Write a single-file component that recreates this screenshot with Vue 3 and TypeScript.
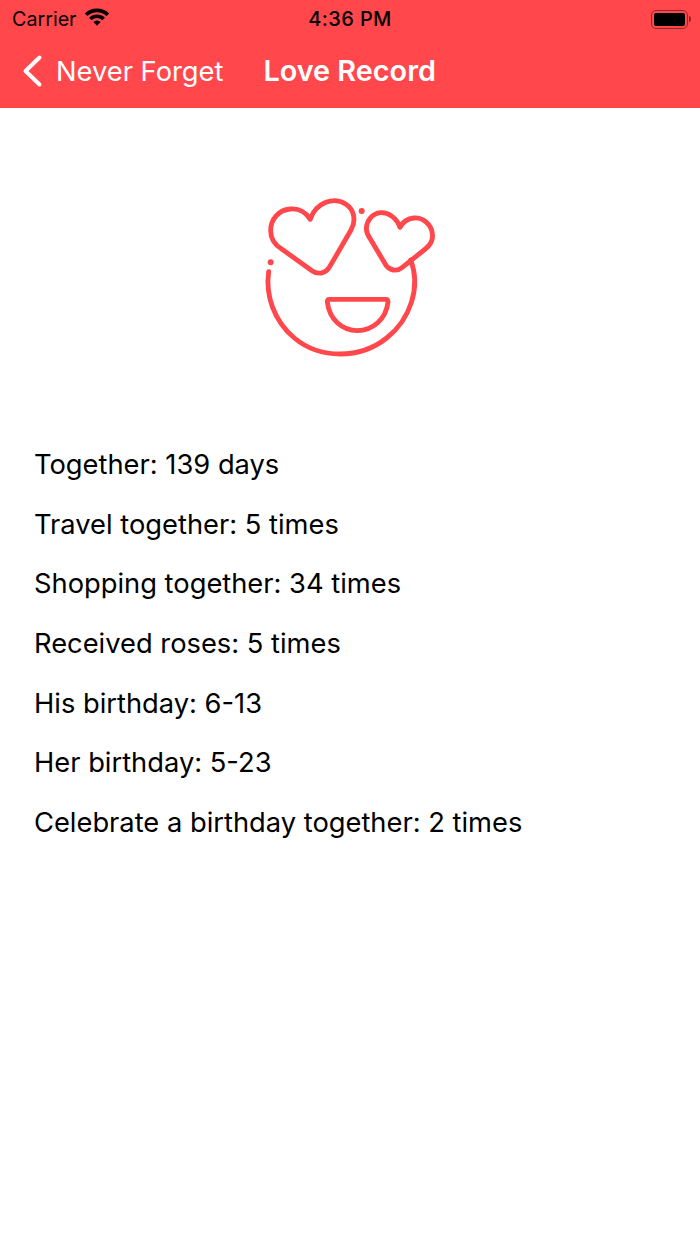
<template>
  <div class="screen">
    <header class="header">
      <div class="status-bar">
        <div class="status-left">
          <span class="carrier">Carrier</span>
          <svg class="wifi" width="28" height="22" viewBox="0 0 26 20">
            <g fill="none" stroke="#000" stroke-width="3.4">
              <path d="M2.9 8.9A14.3 14.3 0 0 1 23.1 8.9" />
              <path d="M6.8 12.8A8.8 8.8 0 0 1 19.2 12.8" />
            </g>
            <path d="M13 19 9.6 15.6A4.8 4.8 0 0 1 16.4 15.6Z" fill="#000" />
          </svg>
        </div>
        <span class="time">4:36 PM</span>
        <div class="battery">
          <div class="battery-body"><div class="battery-level"></div></div>
          <div class="battery-cap"></div>
        </div>
      </div>
      <nav class="nav">
        <div class="back">
          <svg width="24" height="36" viewBox="0 0 24 36">
            <path d="M19.5 4.5 5.5 18l14 13.5" fill="none" stroke="#fff" stroke-width="4" stroke-linecap="round" stroke-linejoin="round" />
          </svg>
          <span>Never Forget</span>
        </div>
        <h1 class="title">Love Record</h1>
      </nav>
    </header>

    <main class="content">
      <svg class="emoji" width="220" height="190" viewBox="0 0 660 570">
        <g fill="none" stroke="#ff474c" stroke-width="14.5" stroke-linecap="round" stroke-linejoin="round">
          <path d="M211 118C197 96 174 85 150 87 116 90 92 118 92 152 92 175 104 194 125 207L217 273C235 285 258 279 268 262L333 150C349 122 343 90 318 73 280 47 226 70 211 118Z" />
          <path d="M480 142C470 114 446 97 422 98 396 100 378 124 379 148 380 158 384 168 391 177L438 256C449 271 470 276 486 263L556 207C572 194 580 178 577 160 573 132 548 112 522 114 503 116 488 126 480 142Z" />
          <path d="M86 275C76 345 101 422 163 474 240 538 360 538 440 474 512 417 543 320 512 240" />
          <path d="M268 358H437C442 358 444 361 444 366 438 418 398 452 352 452 306 452 268 418 262 366 262 361 264 358 268 358Z" />
        </g>
        <circle cx="365" cy="93" r="9" fill="#ff474c" />
        <circle cx="92" cy="247" r="9" fill="#ff474c" />
      </svg>

      <ul class="stats">
        <li v-for="line in lines" :key="line">{{ line }}</li>
      </ul>
    </main>
  </div>
</template>

<script setup lang="ts">
const lines: string[] = [
  'Together: 139 days',
  'Travel together: 5 times',
  'Shopping together: 34 times',
  'Received roses: 5 times',
  'His birthday: 6-13',
  'Her birthday: 5-23',
  'Celebrate a birthday together: 2 times',
]
</script>

<style>
body {
  background: #fff;
}
</style>

<style scoped>
.screen {
  width: 700px;
  height: 1244px;
  background: #fff;
  font-family: Inter, "Liberation Sans", sans-serif;
  overflow: hidden;
}

.header {
  height: 108px;
  background: #ff474c;
}

.status-bar {
  height: 38px;
  padding: 0 12px;
  display: grid;
  grid-template-columns: 1fr auto 1fr;
  align-items: center;
  color: #000;
}

.status-left {
  display: flex;
  align-items: center;
  gap: 6px;
}

.carrier {
  font-size: 19.7px;
}

.wifi {
  margin-top: -6px;
}

.time {
  font-size: 20px;
  font-weight: 500;
  letter-spacing: 0.4px;
}

.battery {
  justify-self: end;
  display: flex;
  align-items: center;
  gap: 1px;
  margin-right: -3px;
}

.battery-body {
  width: 37px;
  height: 19px;
  padding: 2px;
  box-sizing: border-box;
  border: 1.5px solid #8e2a2d;
  border-radius: 5px;
}

.battery-level {
  height: 100%;
  background: #000;
  border-radius: 2px;
}

.battery-cap {
  width: 2px;
  height: 6px;
  background: #8e2a2d;
  border-radius: 0 2px 2px 0;
}

.nav {
  height: 66px;
  padding-left: 20px;
  display: flex;
  align-items: center;
  color: #fff;
}

.back {
  display: flex;
  align-items: center;
  gap: 12px;
  font-size: 27.3px;
}

.title {
  margin: -2px 0 0 40px;
  font-size: 28.8px;
  font-weight: 600;
}

.content {
  display: flex;
  flex-direction: column;
  align-items: center;
  padding-top: 72px;
}

.stats {
  width: 100%;
  box-sizing: border-box;
  list-style: none;
  margin: 65px 0 0;
  padding: 0 34px;
  color: #000;
  font-size: 27.3px;
  line-height: 59.67px;
}
</style>
